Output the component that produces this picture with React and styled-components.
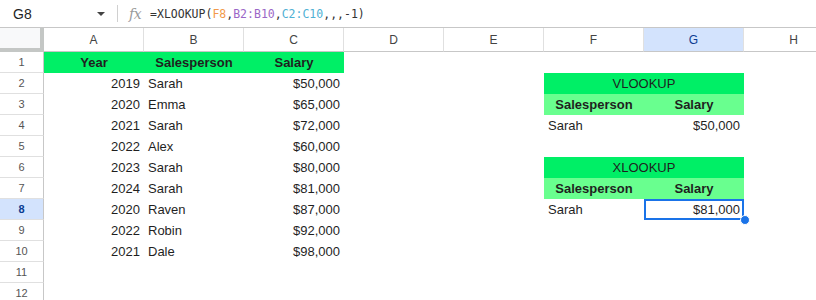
import styled, { createGlobalStyle, css } from "styled-components";

const GlobalStyle = createGlobalStyle`
  html, body {
    margin: 0;
    padding: 0;
    background: #fff;
    overflow: hidden;
  }
  body {
    font-family: "Liberation Sans", Arial, sans-serif;
  }
`;

const COLS = ["A", "B", "C", "D", "E", "F", "G", "H"];
const GREEN = "#00ef66";
const LIGHT_GREEN = "#69ff8f";

const Page = styled.div`
  width: 816px;
  height: 300px;
  overflow: hidden;
  background: #fff;
`;

// Barra de fórmula
const FormulaBar = styled.div`
  display: flex;
  align-items: center;
  height: 27px;
  border-bottom: 1px solid #c7c7c7;
`;

const NameBox = styled.div`
  display: flex;
  align-items: center;
  justify-content: space-between;
  width: 92px;
  padding-left: 13px;
  font-size: 14px;
  color: #1f1f1f;
`;

const Caret = styled.span`
  width: 0;
  height: 0;
  border-left: 4px solid transparent;
  border-right: 4px solid transparent;
  border-top: 4px solid #444;
  margin-top: 1px;
`;

const Divider = styled.span`
  width: 1px;
  height: 17px;
  background: #d0d0d0;
  margin: 0 11px 0 12px;
`;

const Fx = styled.span`
  font-family: "DejaVu Serif", "Liberation Serif", serif;
  font-style: italic;
  font-size: 14px;
  color: #9a9a9a;
  margin-right: 9px;
  letter-spacing: -0.5px;
`;

const Formula = styled.span`
  font-family: "DejaVu Sans Mono", "Liberation Mono", monospace;
  font-size: 11.5px;
  color: #333;
`;

const Ref = styled.span`
  color: ${({ $c }) => $c};
`;

// Grade da planilha
const Row = styled.div`
  display: grid;
  grid-template-columns: 44px repeat(8, 100px);
  height: ${({ $head }) => ($head ? "24px" : "21px")};
`;

const Corner = styled.div`
  background: #f8f9fa;
  border-right: 4px solid #c4c7c5;
  border-bottom: 4px solid #c4c7c5;
  box-sizing: border-box;
`;

const ColHead = styled.div`
  display: flex;
  align-items: center;
  justify-content: center;
  font-size: 12px;
  box-sizing: border-box;
  border-right: 1px solid #e0e0e0;
  border-bottom: 1px solid #c7c7c7;
  color: ${({ $active }) => ($active ? "#0b3d91" : "#444")};
  background: ${({ $active }) => ($active ? "#d3e3fd" : "#fff")};
`;

const RowHead = styled.div`
  display: flex;
  align-items: center;
  justify-content: center;
  font-size: 11px;
  box-sizing: border-box;
  border-right: 1px solid #c7c7c7;
  border-bottom: 1px solid #e0e0e0;
  color: ${({ $active }) => ($active ? "#0b3d91" : "#555")};
  background: ${({ $active }) => ($active ? "#d3e3fd" : "#fff")};
  font-weight: ${({ $active }) => ($active ? 700 : 400)};
`;

const Cell = styled.div`
  position: relative;
  box-sizing: border-box;
  padding: 0 4px;
  font-size: 13px;
  line-height: 21px;
  color: #1f1f1f;
  white-space: nowrap;
  text-align: ${({ $align }) => $align || "left"};
  font-weight: ${({ $bold }) => ($bold ? 700 : 400)};
  background: ${({ $fill }) => $fill || "transparent"};
  grid-column: span ${({ $span }) => $span || 1};
  ${({ $selected }) =>
    $selected &&
    css`
      border: 2px solid #1a73e8;
      line-height: 17px;
      padding: 0 2px;
    `}
`;

const Handle = styled.span`
  position: absolute;
  right: -8px;
  bottom: -7px;
  width: 8px;
  height: 8px;
  border-radius: 50%;
  background: #1a73e8;
  border: 1px solid #fff;
`;

const blank = { text: "" };
const R = (text) => ({ text, align: "right" });
const L = (text) => ({ text });
const H = (text, fill) => ({ text, align: "center", bold: true, fill });

const employees = [
  [2019, "Sarah", "$50,000"],
  [2020, "Emma", "$65,000"],
  [2021, "Sarah", "$72,000"],
  [2022, "Alex", "$60,000"],
  [2023, "Sarah", "$80,000"],
  [2024, "Sarah", "$81,000"],
  [2020, "Raven", "$87,000"],
  [2022, "Robin", "$92,000"],
  [2021, "Dale", "$98,000"],
];

const lookupBlock = (title) => [
  [{ text: title, align: "center", fill: GREEN, span: 2 }],
  [H("Salesperson", LIGHT_GREEN), H("Salary", LIGHT_GREEN)],
];

const sideCells = {
  2: lookupBlock("VLOOKUP")[0],
  3: lookupBlock("VLOOKUP")[1],
  4: [L("Sarah"), R("$50,000")],
  6: lookupBlock("XLOOKUP")[0],
  7: lookupBlock("XLOOKUP")[1],
  8: [L("Sarah"), { ...R("$81,000"), selected: true }],
};

const buildRows = () => {
  const rows = [[H("Year", GREEN), H("Salesperson", GREEN), H("Salary", GREEN), blank, blank, blank, blank, blank]];
  for (let r = 2; r <= 12; r++) {
    const e = employees[r - 2];
    const main = e ? [R(String(e[0])), L(e[1]), R(e[2])] : [blank, blank, blank];
    const side = sideCells[r] || [blank, blank];
    rows.push([...main, blank, blank, ...side, blank]);
  }
  return rows;
};

const SELECTED_ROW = 8;
const SELECTED_COL = "G";

const App = () => {
  const rows = buildRows();
  return (
    <Page>
      <GlobalStyle />
      <FormulaBar>
        <NameBox>
          G8
          <Caret />
        </NameBox>
        <Divider />
        <Fx>fx</Fx>
        <Formula>
          =XLOOKUP(<Ref $c="#f29a4a">F8</Ref>,<Ref $c="#9b67c7">B2:B10</Ref>,
          <Ref $c="#4fb0d4">C2:C10</Ref>,,,-1)
        </Formula>
      </FormulaBar>

      <Row $head>
        <Corner />
        {COLS.map((c) => (
          <ColHead key={c} $active={c === SELECTED_COL}>
            {c}
          </ColHead>
        ))}
      </Row>

      {rows.map((cells, i) => (
        <Row key={i}>
          <RowHead $active={i + 1 === SELECTED_ROW}>{i + 1}</RowHead>
          {cells.map((cell, j) => (
            <Cell
              key={j}
              $align={cell.align}
              $bold={cell.bold}
              $fill={cell.fill}
              $span={cell.span}
              $selected={cell.selected}
            >
              {cell.text}
              {cell.selected && <Handle />}
            </Cell>
          ))}
        </Row>
      ))}
    </Page>
  );
};

export default App;
